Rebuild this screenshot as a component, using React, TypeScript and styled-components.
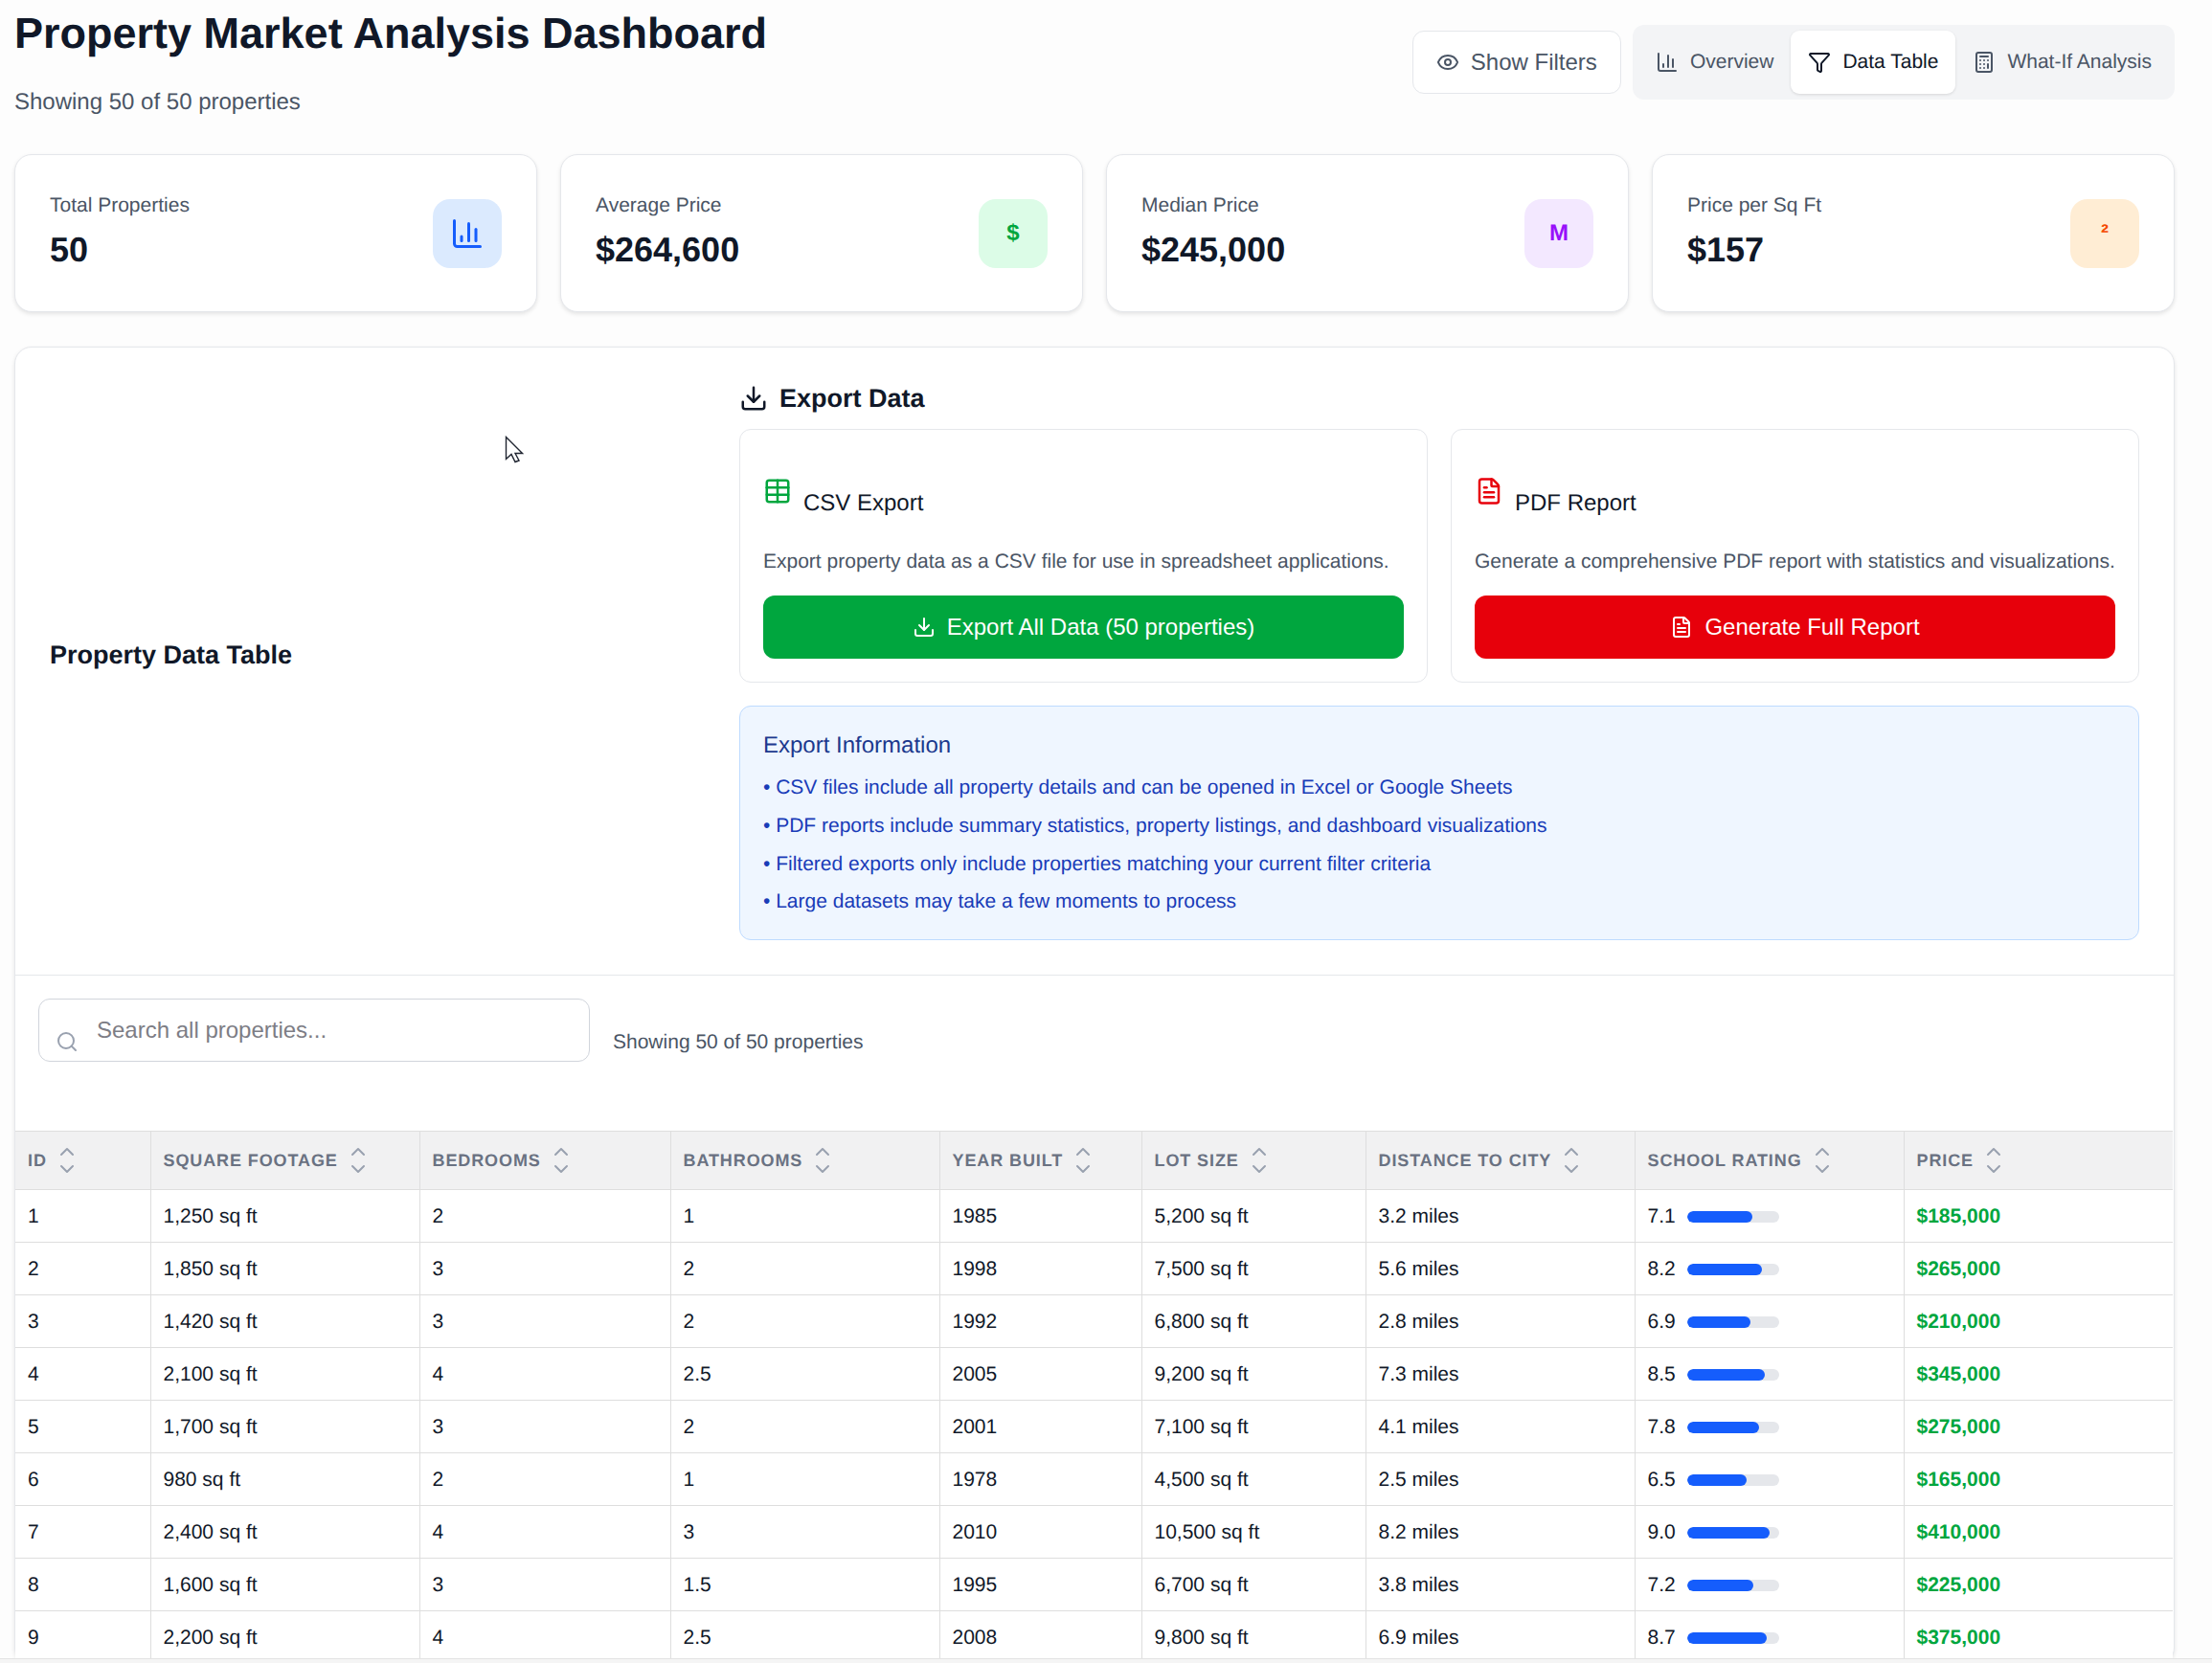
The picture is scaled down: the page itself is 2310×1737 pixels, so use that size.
import styled, { createGlobalStyle } from 'styled-components';
import {
  Calculator,
  ChartColumn,
  ChevronDown,
  ChevronUp,
  Download,
  Eye,
  FileText,
  Funnel,
  Search,
  Table,
} from 'lucide-react';

const GlobalStyle = createGlobalStyle`
  html, body {
    margin: 0;
    height: 1737px;
    overflow: hidden;
    background: #fdfdfd;
    color: #101828;
    font-family: "Liberation Sans", Arial, sans-serif;
    text-rendering: geometricPrecision;
  }
  * {
    box-sizing: border-box;
  }
`;

const Page = styled.div`
  padding: 8px 39px 0 15px;
`;

// 상단 제목 + 버튼 영역
const Header = styled.header`
  display: flex;
  justify-content: space-between;
  align-items: center;
  margin-bottom: 40px;
`;

const Title = styled.h1`
  margin: 0;
  font-size: 45px;
  line-height: 54px;
  font-weight: 700;
`;

const Subtitle = styled.p`
  margin: 30px 0 0;
  font-size: 24px;
  line-height: 29px;
  color: #4a5565;
`;

const Controls = styled.div`
  display: flex;
  align-items: center;
  gap: 12px;
`;

const FilterButton = styled.button`
  display: flex;
  align-items: center;
  gap: 12px;
  height: 66px;
  padding: 0 24px;
  font: inherit;
  font-size: 24px;
  color: #4a5565;
  background: #fff;
  border: 1px solid #e5e7eb;
  border-radius: 12px;
`;

const TabList = styled.div`
  display: flex;
  gap: 0;
  padding: 6px;
  background: #f3f4f6;
  border-radius: 12px;
`;

const Tab = styled.div<{ $active?: boolean }>`
  display: flex;
  align-items: center;
  gap: 12px;
  height: 66px;
  padding: 1px 18px 0;
  font-size: 21px;
  color: ${(p) => (p.$active ? '#101828' : '#4a5565')};
  background: ${(p) => (p.$active ? '#fff' : 'transparent')};
  border-radius: 9px;
  box-shadow: ${(p) => (p.$active ? '0 1px 3px rgba(0, 0, 0, 0.12)' : 'none')};
`;

const StatGrid = styled.div`
  display: grid;
  grid-template-columns: repeat(4, 1fr);
  gap: 24px;
  margin-bottom: 36px;
`;

const StatCard = styled.div`
  display: flex;
  justify-content: space-between;
  align-items: center;
  height: 165px;
  padding: 0 36px;
  background: #fff;
  border: 1px solid #e5e7eb;
  border-radius: 18px;
  box-shadow: 0 2px 4px rgba(0, 0, 0, 0.1);
`;

const StatLabel = styled.div`
  font-size: 21px;
  line-height: 30px;
  color: #4a5565;
`;

const StatValue = styled.div`
  margin-top: 7px;
  margin-bottom: 2px;
  font-size: 36px;
  line-height: 48px;
  font-weight: 700;
`;

const StatIcon = styled.div<{ $bg: string; $fg: string; $size?: number }>`
  display: flex;
  justify-content: center;
  align-items: center;
  width: 72px;
  height: 72px;
  font-size: ${(p) => p.$size ?? 24}px;
  font-weight: 700;
  color: ${(p) => p.$fg};
  background: ${(p) => p.$bg};
  border-radius: 18px;
`;

const Panel = styled.section`
  background: #fff;
  border: 1px solid #e5e7eb;
  border-radius: 18px;
  box-shadow: 0 2px 4px rgba(0, 0, 0, 0.1);
`;

const PanelHead = styled.div`
  display: flex;
  justify-content: space-between;
  align-items: center;
  padding: 35px 36px 36px;
  border-bottom: 1px solid #e5e7eb;
`;

const PanelTitle = styled.h2`
  margin: 0 0 13px;
  font-size: 27px;
  line-height: 36px;
  font-weight: 700;
`;

const ExportArea = styled.div`
  width: 1462px;
`;

const ExportHeading = styled.h3`
  display: flex;
  align-items: center;
  gap: 12px;
  height: 36px;
  margin: 0 0 14px;
  font-size: 27px;
  font-weight: 700;
`;

const ExportGrid = styled.div`
  display: grid;
  grid-template-columns: 1fr 1fr;
  gap: 24px;
`;

const ExportCard = styled.div`
  height: 265px;
  padding: 49px 24px 0;
  background: #fff;
  border: 1px solid #e5e7eb;
  border-radius: 12px;
`;

const ExportTitle = styled.div<{ $color: string }>`
  display: flex;
  align-items: flex-start;
  gap: 12px;
  height: 45px;
  font-size: 24px;
  color: #101828;
  svg {
    color: ${(p) => p.$color};
    flex-shrink: 0;
  }
  span {
    margin-top: 10px;
    line-height: 36px;
  }
`;

const ExportText = styled.p`
  margin: 28px 0 20px;
  font-size: 21px;
  line-height: 32px;
  white-space: nowrap;
  color: #4a5565;
`;

const ExportButton = styled.button<{ $bg: string }>`
  display: flex;
  justify-content: center;
  align-items: center;
  gap: 12px;
  width: 100%;
  height: 66px;
  margin-top: -1px;
  font: inherit;
  font-size: 24px;
  color: #fff;
  background: ${(p) => p.$bg};
  border: 0;
  border-radius: 12px;
`;

const InfoBox = styled.div`
  margin-top: 24px;
  height: 245px;
  padding: 24px;
  color: #193cb8;
  background: #eff6ff;
  border: 1px solid #bedbff;
  border-radius: 12px;
`;

const InfoTitle = styled.div`
  font-size: 24px;
  line-height: 33px;
  color: #1c398e;
`;

const InfoList = styled.ul`
  margin: 8px 0 0;
  padding: 0;
  list-style: none;
`;

const InfoItem = styled.li`
  font-size: 21px;
  line-height: 39.75px;
`;

const Toolbar = styled.div`
  display: flex;
  align-items: center;
  gap: 24px;
  margin-bottom: 24px;
  padding: 24px;
`;

const SearchWrap = styled.div`
  position: relative;
  width: 576px;
  padding-bottom: 24px;
`;

const SearchIcon = styled(Search)`
  position: absolute;
  top: 50%;
  left: 18px;
  color: #99a1af;
  transform: translateY(-50%);
`;

const SearchInput = styled.input`
  display: block;
  width: 100%;
  height: 66px;
  padding: 0 18px 0 60px;
  font: inherit;
  font-size: 24px;
  color: #101828;
  background: #fff;
  border: 1px solid #d1d5dc;
  border-radius: 12px;
  outline: none;
  &::placeholder {
    color: #7d7d85;
  }
`;

const ResultCount = styled.div`
  padding-top: 2px;
  font-size: 21px;
  color: #4a5565;
`;

const DataTable = styled.table`
  width: 2253px;
  table-layout: fixed;
  border-collapse: collapse;
`;

const Column = styled.col<{ $width: number }>`
  width: ${(p) => p.$width}px;
`;

const HeadCell = styled.th`
  height: 61px;
  padding: 0 12px 0 13px;
  text-align: left;
  background: #f1f1f2;
  border: 1px solid #dedede;
  border-left: 0;
  &:last-child {
    border-right: 0;
  }
`;

const HeadInner = styled.div`
  display: flex;
  align-items: center;
  gap: 9px;
  font-size: 18px;
  font-weight: 700;
  letter-spacing: 0.9px;
  text-transform: uppercase;
  color: #6a7282;
`;

const SortIcons = styled.span`
  display: flex;
  flex-direction: column;
  color: #99a1af;
  svg + svg {
    margin-top: -6px;
  }
`;

const Cell = styled.td<{ $price?: boolean }>`
  height: 55px;
  padding: 2px 12px 0 13px;
  font-size: 21px;
  font-weight: ${(p) => (p.$price ? 700 : 400)};
  color: ${(p) => (p.$price ? '#00a63e' : '#101828')};
  background: #fff;
  border: 1px solid #dedede;
  border-left: 0;
  &:last-child {
    border-right: 0;
  }
`;

const Rating = styled.div`
  display: flex;
  align-items: center;
  gap: 12px;
`;

const RatingTrack = styled.div`
  width: 96px;
  height: 12px;
  overflow: hidden;
  background: #e5e7eb;
  border-radius: 6px;
`;

const RatingFill = styled.div`
  height: 100%;
  background: #155dfc;
  border-radius: 6px;
`;

// 화면 위에 떠 있는 마우스 커서
const Cursor = styled.svg`
  position: absolute;
  top: 455px;
  left: 527px;
`;

const BottomEdge = styled.div`
  position: fixed;
  right: 0;
  bottom: 0;
  left: 0;
  height: 5px;
  background: #f5f5f5;
  border-top: 1px solid #e3e3e3;
`;

const columns = [
  { label: 'ID', width: 141 },
  { label: 'Square Footage', width: 281 },
  { label: 'Bedrooms', width: 262 },
  { label: 'Bathrooms', width: 281 },
  { label: 'Year Built', width: 211 },
  { label: 'Lot Size', width: 234 },
  { label: 'Distance to City', width: 281 },
  { label: 'School Rating', width: 281 },
  { label: 'Price', width: 281 },
];

const rows = [
  ['1', '1,250 sq ft', '2', '1', '1985', '5,200 sq ft', '3.2 miles', '7.1', '$185,000'],
  ['2', '1,850 sq ft', '3', '2', '1998', '7,500 sq ft', '5.6 miles', '8.2', '$265,000'],
  ['3', '1,420 sq ft', '3', '2', '1992', '6,800 sq ft', '2.8 miles', '6.9', '$210,000'],
  ['4', '2,100 sq ft', '4', '2.5', '2005', '9,200 sq ft', '7.3 miles', '8.5', '$345,000'],
  ['5', '1,700 sq ft', '3', '2', '2001', '7,100 sq ft', '4.1 miles', '7.8', '$275,000'],
  ['6', '980 sq ft', '2', '1', '1978', '4,500 sq ft', '2.5 miles', '6.5', '$165,000'],
  ['7', '2,400 sq ft', '4', '3', '2010', '10,500 sq ft', '8.2 miles', '9.0', '$410,000'],
  ['8', '1,600 sq ft', '3', '1.5', '1995', '6,700 sq ft', '3.8 miles', '7.2', '$225,000'],
  ['9', '2,200 sq ft', '4', '2.5', '2008', '9,800 sq ft', '6.9 miles', '8.7', '$375,000'],
];

const infoItems = [
  '• CSV files include all property details and can be opened in Excel or Google Sheets',
  '• PDF reports include summary statistics, property listings, and dashboard visualizations',
  '• Filtered exports only include properties matching your current filter criteria',
  '• Large datasets may take a few moments to process',
];

function App() {
  return (
    <>
      <GlobalStyle />
      <Page>
        <Header>
          <div>
            <Title>Property Market Analysis Dashboard</Title>
            <Subtitle>Showing 50 of 50 properties</Subtitle>
          </div>
          <Controls>
            <FilterButton>
              <Eye size={24} />
              Show Filters
            </FilterButton>
            <TabList>
              <Tab>
                <ChartColumn size={24} />
                Overview
              </Tab>
              <Tab $active>
                <Funnel size={24} />
                Data Table
              </Tab>
              <Tab>
                <Calculator size={24} />
                What-If Analysis
              </Tab>
            </TabList>
          </Controls>
        </Header>

        <StatGrid>
          <StatCard>
            <div>
              <StatLabel>Total Properties</StatLabel>
              <StatValue>50</StatValue>
            </div>
            <StatIcon $bg="#dbeafe" $fg="#155dfc">
              <ChartColumn size={36} />
            </StatIcon>
          </StatCard>
          <StatCard>
            <div>
              <StatLabel>Average Price</StatLabel>
              <StatValue>$264,600</StatValue>
            </div>
            <StatIcon $bg="#dcfce7" $fg="#00a63e">
              $
            </StatIcon>
          </StatCard>
          <StatCard>
            <div>
              <StatLabel>Median Price</StatLabel>
              <StatValue>$245,000</StatValue>
            </div>
            <StatIcon $bg="#f3e8ff" $fg="#9810fa">
              M
            </StatIcon>
          </StatCard>
          <StatCard>
            <div>
              <StatLabel>Price per Sq Ft</StatLabel>
              <StatValue>$157</StatValue>
            </div>
            <StatIcon $bg="#ffedd4" $fg="#f54900">
              ²
            </StatIcon>
          </StatCard>
        </StatGrid>

        <Panel>
          <PanelHead>
            <PanelTitle>Property Data Table</PanelTitle>
            <ExportArea>
              <ExportHeading>
                <Download size={30} />
                Export Data
              </ExportHeading>
              <ExportGrid>
                <ExportCard>
                  <ExportTitle $color="#00a63e">
                    <Table size={30} />
                    <span>CSV Export</span>
                  </ExportTitle>
                  <ExportText>
                    Export property data as a CSV file for use in spreadsheet applications.
                  </ExportText>
                  <ExportButton $bg="#00a63e">
                    <Download size={24} />
                    Export All Data (50 properties)
                  </ExportButton>
                </ExportCard>
                <ExportCard>
                  <ExportTitle $color="#e7000b">
                    <FileText size={30} />
                    <span>PDF Report</span>
                  </ExportTitle>
                  <ExportText>
                    Generate a comprehensive PDF report with statistics and visualizations.
                  </ExportText>
                  <ExportButton $bg="#e7000b">
                    <FileText size={24} />
                    Generate Full Report
                  </ExportButton>
                </ExportCard>
              </ExportGrid>
              <InfoBox>
                <InfoTitle>Export Information</InfoTitle>
                <InfoList>
                  {infoItems.map((item) => (
                    <InfoItem key={item}>{item}</InfoItem>
                  ))}
                </InfoList>
              </InfoBox>
            </ExportArea>
          </PanelHead>

          <Toolbar>
            <SearchWrap>
              <SearchIcon size={24} />
              <SearchInput placeholder="Search all properties..." />
            </SearchWrap>
            <ResultCount>Showing 50 of 50 properties</ResultCount>
          </Toolbar>

          <DataTable>
            <colgroup>
              {columns.map((col) => (
                <Column key={col.label} $width={col.width} />
              ))}
            </colgroup>
            <thead>
              <tr>
                {columns.map((col) => (
                  <HeadCell key={col.label}>
                    <HeadInner>
                      {col.label}
                      <SortIcons>
                        <ChevronUp size={24} strokeWidth={2} />
                        <ChevronDown size={24} strokeWidth={2} />
                      </SortIcons>
                    </HeadInner>
                  </HeadCell>
                ))}
              </tr>
            </thead>
            <tbody>
              {rows.map((row) => (
                <tr key={row[0]}>
                  {row.map((value, i) => (
                    <Cell key={i} $price={i === 8}>
                      {i === 7 ? (
                        <Rating>
                          {value}
                          <RatingTrack>
                            <RatingFill style={{ width: `${Number(value) * 10}%` }} />
                          </RatingTrack>
                        </Rating>
                      ) : (
                        value
                      )}
                    </Cell>
                  ))}
                </tr>
              ))}
            </tbody>
          </DataTable>
        </Panel>
      </Page>

      <Cursor width="20" height="29" viewBox="0 0 20 29">
        <path
          d="M1.5 1.5 V24.5 L7 19.5 L11 27.5 L15 26 L11 18.5 H18.5 Z"
          fill="#fff"
          stroke="#1f2430"
          strokeWidth="1.4"
          strokeLinejoin="miter"
        />
      </Cursor>
      <BottomEdge />
    </>
  );
}

export default App;
